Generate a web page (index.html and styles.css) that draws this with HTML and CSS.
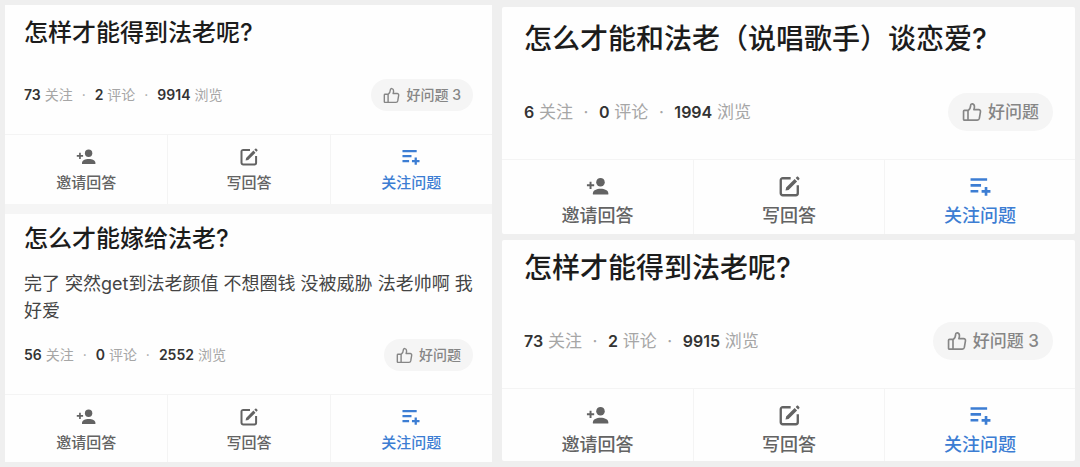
FILE: index.html
```html
<!DOCTYPE html>
<html lang="zh-CN">
<head>
<meta charset="utf-8">
<title>问题列表</title>
<link rel="stylesheet" href="styles.css">
</head>
<body>
<svg class="sprite" aria-hidden="true">
  <symbol id="invite" viewBox="0 0 20 16">
    <circle cx="12.6" cy="4.2" r="3.7"/>
    <path d="M6 15v-1.200c0-2.500 3.200-3.900 6.700-3.900s6.700 1.400 6.700 3.900V15z"/>
    <path d="M3.100 3.800h1.700v2.300h2.300v1.700H4.800v2.300H3.100V7.800H.8V6.100h2.300z"/>
  </symbol>
  <symbol id="write" viewBox="0 0 18 18">
    <path d="M10 1.900H3.200a1.700 1.700 0 0 0-1.700 1.700v11.200a1.700 1.700 0 0 0 1.700 1.700h11.200a1.700 1.700 0 0 0 1.700-1.700V8" fill="none" stroke="currentColor" stroke-width="2"/>
    <path d="M5.600 12.500l.5-2.600 7.300-7.300 2.100 2.100-7.300 7.300zM14.300 1.700l1-1c.3-.3.8-.3 1.100 0l1 1c.3.3.3.800 0 1.100l-1 1z"/>
  </symbol>
  <symbol id="follow" viewBox="0 0 19 17">
    <path d="M.5 1h15v2.400H.5zM.5 6.300h9.500v2.400H.5zM.5 11.600h7v2.400h-7zM13.300 9h2.400v2.700h2.800v2.400h-2.800v2.700h-2.400v-2.700h-2.800v-2.400h2.800z"/>
  </symbol>
  <symbol id="like" viewBox="0 0 18 18">
    <path d="M2.200 7.600h3.200v8.700H2.200a.8.8 0 0 1-.8-.8V8.400a.8.8 0 0 1 .8-.8zM5.400 7.800C7 6.800 7.700 5.300 7.800 2.900c0-1.800 3.400-1.900 3.400 1.400 0 1-.2 1.800-.5 2.600h4.200c1.300 0 1.900.9 1.700 2l-1 5.900c-.2 1-.8 1.500-1.800 1.500H5.400" fill="none" stroke="currentColor" stroke-width="1.500" stroke-linejoin="round"/>
  </symbol>
</svg>
<main class="board">
  <section class="column compact">
    <article class="card">
      <div class="content">
        <h2 class="title">怎样才能得到法老呢?</h2>
        <div class="meta">
          <p class="stats"><span><b>73</b> 关注</span><i>·</i><span><b>2</b> 评论</span><i>·</i><span><b>9914</b> 浏览</span></p>
          <button class="like" type="button"><svg><use href="#like"/></svg>好问题 3</button>
        </div>
      </div>
      <div class="actions">
        <button type="button"><svg class="wide"><use href="#invite"/></svg>邀请回答</button>
        <button type="button"><svg><use href="#write"/></svg>写回答</button>
        <button type="button" class="primary"><svg><use href="#follow"/></svg>关注问题</button>
      </div>
    </article>
    <article class="card">
      <div class="content">
        <h2 class="title">怎么才能嫁给法老?</h2>
        <p class="detail">完了 突然get到法老颜值 不想圈钱 没被威胁 法老帅啊 我好爱</p>
        <div class="meta">
          <p class="stats"><span><b>56</b> 关注</span><i>·</i><span><b>0</b> 评论</span><i>·</i><span><b>2552</b> 浏览</span></p>
          <button class="like" type="button"><svg><use href="#like"/></svg>好问题</button>
        </div>
      </div>
      <div class="actions">
        <button type="button"><svg class="wide"><use href="#invite"/></svg>邀请回答</button>
        <button type="button"><svg><use href="#write"/></svg>写回答</button>
        <button type="button" class="primary"><svg><use href="#follow"/></svg>关注问题</button>
      </div>
    </article>
  </section>
  <section class="column large">
    <article class="card">
      <div class="content">
        <h2 class="title">怎么才能和法老（说唱歌手）谈恋爱?</h2>
        <div class="meta">
          <p class="stats"><span><b>6</b> 关注</span><i>·</i><span><b>0</b> 评论</span><i>·</i><span><b>1994</b> 浏览</span></p>
          <button class="like" type="button"><svg><use href="#like"/></svg>好问题</button>
        </div>
      </div>
      <div class="actions">
        <button type="button"><svg class="wide"><use href="#invite"/></svg>邀请回答</button>
        <button type="button"><svg><use href="#write"/></svg>写回答</button>
        <button type="button" class="primary"><svg><use href="#follow"/></svg>关注问题</button>
      </div>
    </article>
    <article class="card">
      <div class="content">
        <h2 class="title">怎样才能得到法老呢?</h2>
        <div class="meta">
          <p class="stats"><span><b>73</b> 关注</span><i>·</i><span><b>2</b> 评论</span><i>·</i><span><b>9915</b> 浏览</span></p>
          <button class="like" type="button"><svg><use href="#like"/></svg>好问题 3</button>
        </div>
      </div>
      <div class="actions">
        <button type="button"><svg class="wide"><use href="#invite"/></svg>邀请回答</button>
        <button type="button"><svg><use href="#write"/></svg>写回答</button>
        <button type="button" class="primary"><svg><use href="#follow"/></svg>关注问题</button>
      </div>
    </article>
  </section>
</main>
</body>
</html>
```
FILE: styles.css
```css
* {
  box-sizing: border-box;
}

body {
  margin: 0;
  background: #efefef;
  color: #1c1c1c;
  font-family: Inter, "Noto Sans CJK SC", sans-serif;
}

h2,
p {
  margin: 0;
}

button {
  border: 0;
  padding: 0;
  background: none;
  font-family: inherit;
  cursor: pointer;
}

svg {
  fill: currentColor;
}

.sprite {
  display: none;
}

.board {
  display: grid;
  grid-template-columns: 487fr 573fr;
  align-items: start;
  gap: 10px;
  padding: 5px;
}

.column {
  display: grid;
}

.compact {
  --side: 19px;
  --title: 24px;
  --title-line: 36px;
  --number: 14px;
  --label: 14px;
  --pill: 32px;
  --pill-pad: 12px;
  --like-icon: 17px;
  --space: 28px;
  --bottom: 23px;
  --action: 15px;
  --action-line: 22px;
  --icon: 18px;
  --icon-wide: 20px;
  --action-top: 13px;
  --action-gap: 6px;
  --action-bottom: 10px;
  --dot: 22px;
  gap: 10px;
  background: #f5f5f5;
}

.large {
  --side: 22px;
  --title: 28px;
  --title-line: 42px;
  --number: 16px;
  --label: 17px;
  --pill: 38px;
  --pill-pad: 14px;
  --like-icon: 20px;
  --space: 33px;
  --bottom: 28px;
  --action: 18px;
  --action-line: 26px;
  --icon: 21px;
  --icon-wide: 23px;
  --action-top: 16px;
  --action-gap: 6px;
  --action-bottom: 5px;
  --dot: 26px;
  gap: 6px;
  padding-top: 2px;
}

.card {
  background: #fefefe;
}

.large .card {
  border-radius: 2px;
}

.content {
  padding: 10px var(--side) var(--bottom);
}

.large .content {
  padding-top: 11px;
}

.card + .card .content {
  padding-top: 7px;
}

.card + .card {
  --action-bottom: 8px;
}

.large .card + .card {
  --action-bottom: 3px;
}

.title {
  font-size: var(--title);
  line-height: var(--title-line);
  font-weight: 500;
}

.detail {
  margin-top: 13px;
  color: #444;
  font-size: 18px;
  line-height: 27px;
}

.meta {
  display: flex;
  align-items: center;
  justify-content: space-between;
  margin-top: var(--space);
}

.detail + .meta {
  margin-top: 15px;
}

.stats {
  display: flex;
  align-items: center;
  color: #a6a6a6;
  font-size: var(--label);
  line-height: var(--action-line);
}

.stats b {
  color: #333;
  font-size: var(--number);
  font-weight: 600;
}

.stats i {
  width: var(--dot);
  text-align: center;
  font-style: normal;
}

.like {
  display: flex;
  align-items: center;
  gap: 6px;
  height: var(--pill);
  padding: 0 var(--pill-pad);
  border-radius: var(--pill);
  background: #f5f5f5;
  color: #868686;
  font-size: var(--label);
  line-height: var(--action-line);
  font-weight: 500;
}

.like svg {
  width: var(--like-icon);
  height: var(--like-icon);
}

.actions {
  display: grid;
  grid-template-columns: repeat(3, 1fr);
  border-top: 1px solid #f4f4f4;
}

.actions button {
  display: flex;
  flex-direction: column;
  align-items: center;
  gap: var(--action-gap);
  padding: var(--action-top) 0 var(--action-bottom);
  color: #636363;
  font-size: var(--action);
  line-height: var(--action-line);
  font-weight: 500;
}

.actions button + button {
  border-left: 1px solid #f4f4f4;
}

.actions svg {
  width: var(--icon);
  height: var(--icon);
}

.actions .wide {
  width: var(--icon-wide);
}

.actions .primary {
  color: #3c7dd3;
}
```
